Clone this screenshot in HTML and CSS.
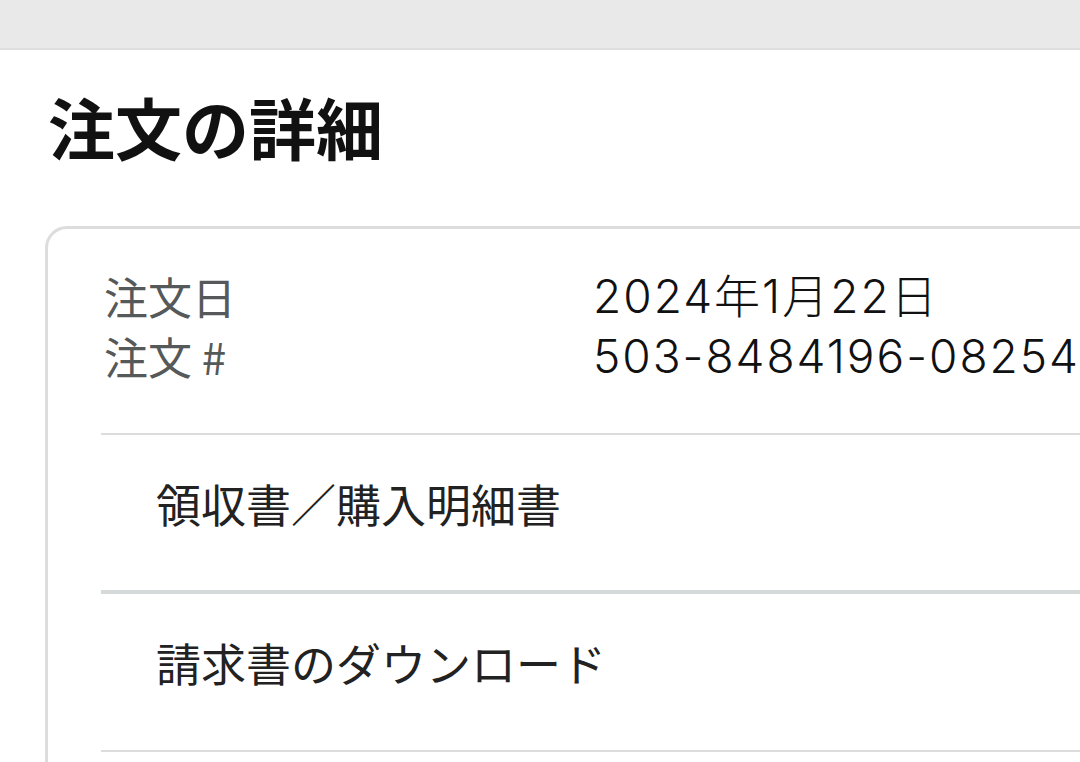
FILE: index.html
```html
<!DOCTYPE html>
<html lang="ja">
<head>
    <meta charset="UTF-8">
    <meta name="viewport" content="width=device-width, initial-scale=1.0">
    <title>注文の詳細</title>
    <link rel="stylesheet" href="styles.css">
</head>
<body>
    <div class="topbar"></div>
    <main class="page">
        <h1 class="title">注文の詳細</h1>
        <section class="card">
            <div class="summary">
                <div class="label">注文日</div>
                <div class="value">2024年1月22日</div>
                <div class="label">注文 #</div>
                <div class="value">503-8484196-08254</div>
            </div>
            <a class="row" href="#">領収書／購入明細書</a>
            <a class="row row-thick" href="#">請求書のダウンロード</a>
            <a class="row" href="#">&nbsp;</a>
        </section>
    </main>
</body>
</html>
```

FILE: styles.css
```css
body {
    margin: 0;
    background-color: #fff;
    font-family: 'Noto Sans CJK JP', 'Noto Sans', sans-serif;
    color: #111;
    overflow: hidden;
}

.topbar {
    height: 48px;
    background-color: #e9e9e9;
    border-bottom: 2px solid #dedede;
}

.page {
    padding-left: 45px;
}

.title {
    margin: 0;
    padding: 31px 0 0 3px;
    font-size: 67px;
    line-height: 90px;
    font-weight: 700;
    color: #111;
}

.card {
    margin-top: 55px;
    margin-right: -40px;
    border: 3px solid #dddddd;
    border-radius: 22px 0 0 0;
    padding: 36px 0 0 53px;
}

.summary {
    display: grid;
    grid-template-columns: 489px 1fr;
    font-size: 44px;
    line-height: 60px;
    padding: 1px 3px 47px;
    white-space: nowrap;
}

.label {
    color: #565959;
}

.value {
    font-family: 'Inter', 'Noto Sans CJK JP', sans-serif;
    font-weight: 300;
    font-size: 46px;
    letter-spacing: 2px;
    color: #111;
}

.row {
    display: block;
    border-top: 2px solid #dcdcdc;
    padding: 0 55px 18px;
    height: 137px;
    line-height: 137px;
    font-size: 45px;
    color: #222;
    text-decoration: none;
    white-space: nowrap;
}

.row-thick {
    border-top: 4px solid #d5d9d9;
    height: 138px;
    line-height: 138px;
}
```
